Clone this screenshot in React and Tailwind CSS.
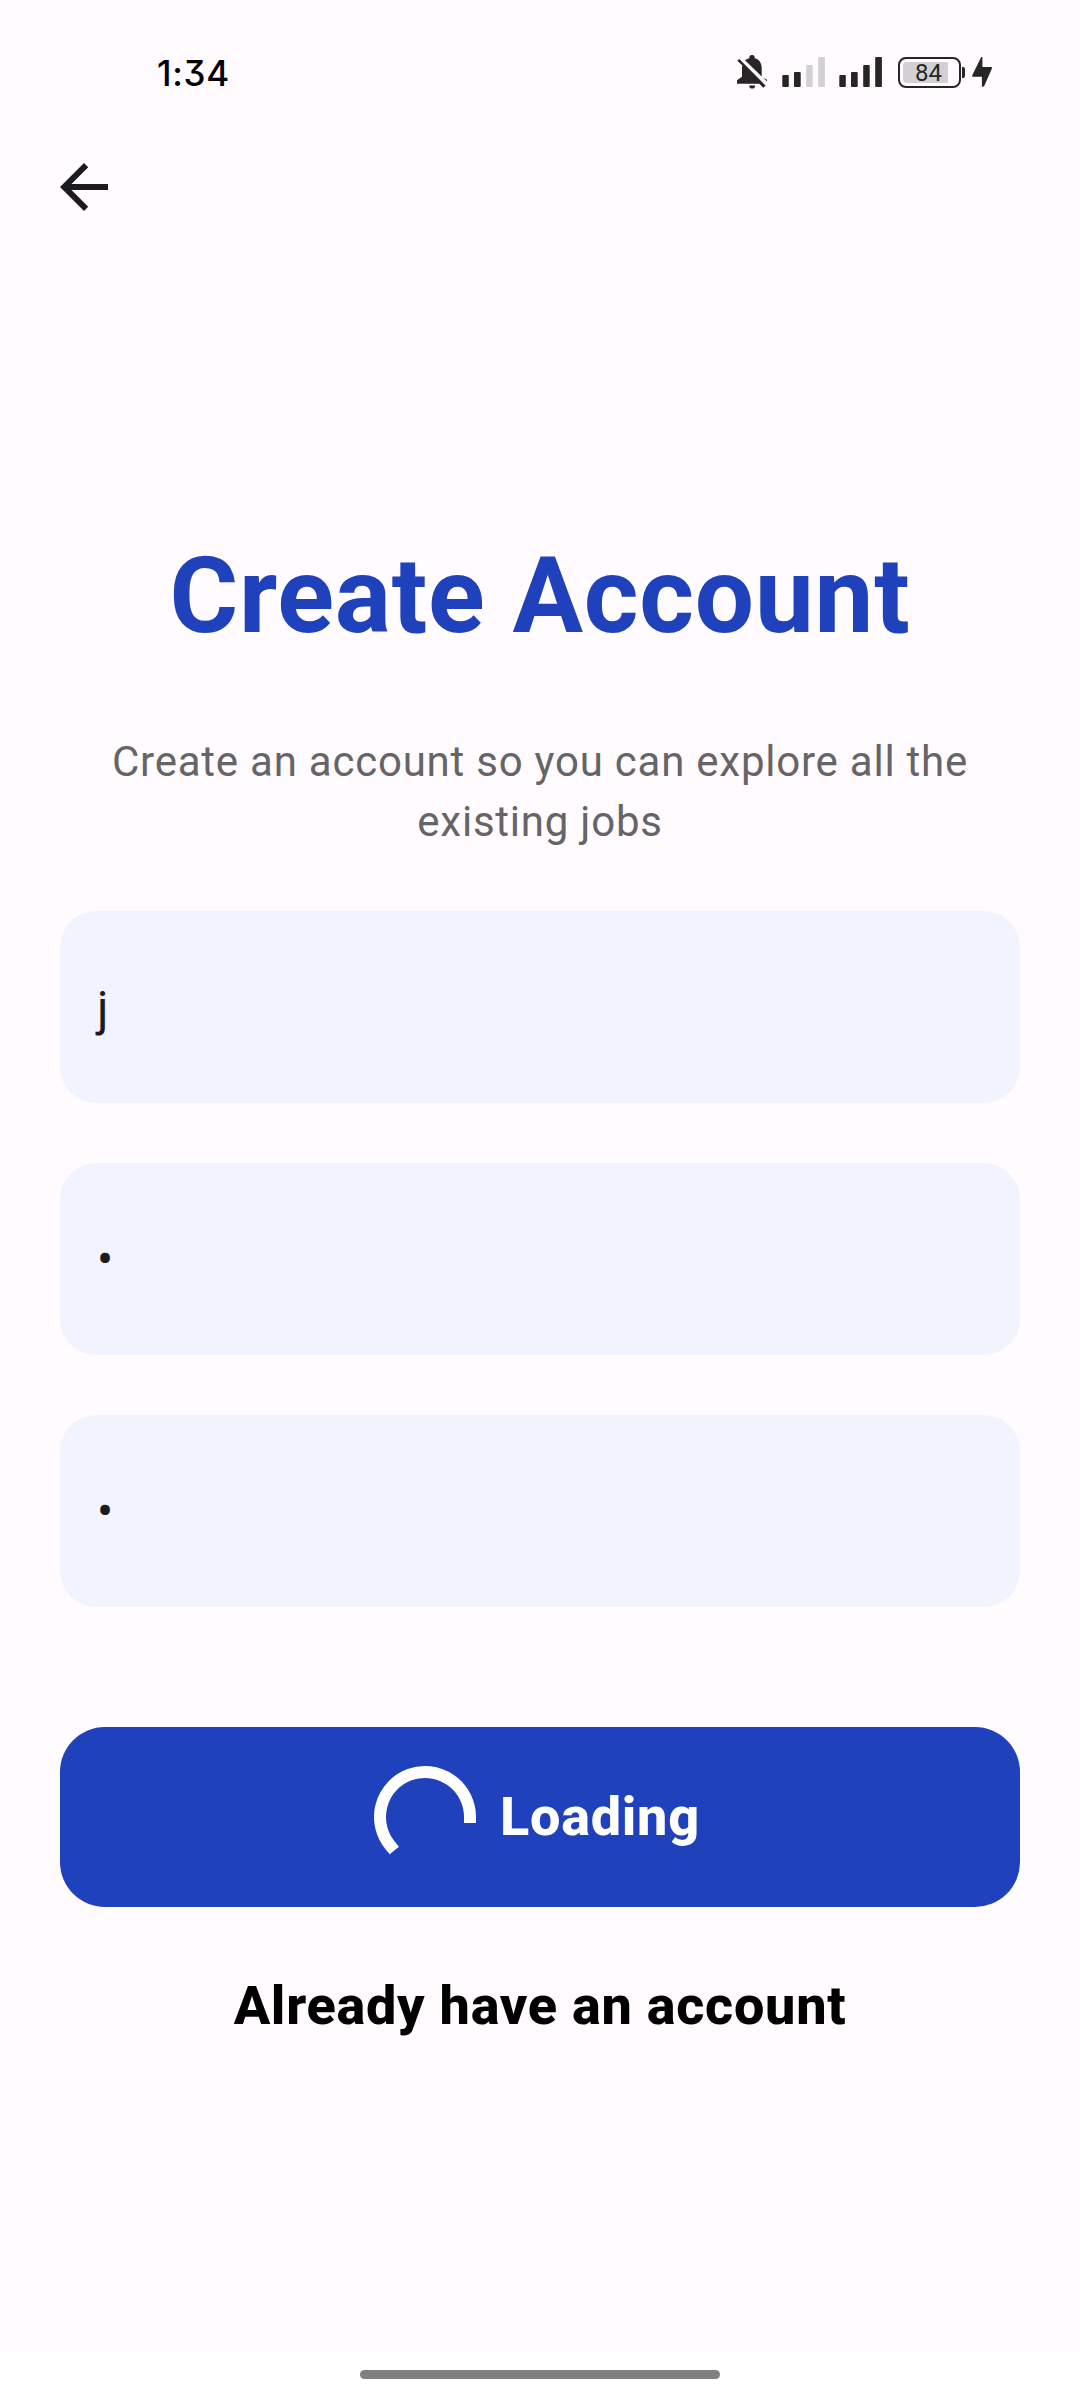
function StatusIcons() {
  return (
    <div className="flex h-[36px] items-center text-[#262626]">
      <svg className="h-[36px] w-[32px]" viewBox="0 0 32 36" fill="currentColor">
        <path d="M9 6.200C10.300 5.200 11.700 4.600 13.300 4.200V3.600a2.700 2.700 0 0 1 5.400 0v.6c4.700 1.200 7 5 7 9.800v8.700l2.600 1.700 2.700 1.400v1.800z" />
        <path d="M3.300 5L29.700 31.700l-2.400 2-4-4H1v-3.400l5-3.600V14c0-1 .1-1.800.4-2.600L1.300 6.700z" />
        <path d="M13.200 31.400h6a3 3.100 0 0 1-6 0z" />
      </svg>
      <svg className="ml-[14px] h-[36px] w-[44px]" viewBox="0 0 44 36" fill="currentColor">
        <rect x="0.300" y="21" width="6.500" height="12" rx="1" />
        <rect x="12" y="18" width="6.700" height="15" rx="1" />
        <rect x="24.200" y="11" width="6.500" height="22" rx="1" fill="#d2d0d3" />
        <rect x="36.200" y="3" width="6.700" height="30" rx="1" fill="#d2d0d3" />
      </svg>
      <svg className="ml-[13px] h-[36px] w-[44px]" viewBox="0 0 44 36" fill="currentColor">
        <rect x="0.300" y="21" width="6.500" height="12" rx="1" />
        <rect x="12" y="18" width="6.700" height="15" rx="1" />
        <rect x="24.200" y="11" width="6.500" height="22" rx="1" />
        <rect x="36.200" y="3" width="6.700" height="30" rx="1" />
      </svg>
      <div className="ml-[15px] flex h-[31px] w-[63px] items-center rounded-[8px] border-2 border-[#262626] pl-[3px]">
        <div className="flex h-[21px] w-[45px] items-center rounded-l-[4px] bg-[#d2d0d3] pt-[2px] pl-[12px] font-['Roboto',sans-serif] text-[24px] leading-none text-[#262626]">
          84
        </div>
      </div>
      <div className="ml-[1px] h-[11px] w-[3px] rounded-r-[2px] bg-[#262626]" />
      <svg className="ml-[6px] h-[36px] w-[22px]" viewBox="0 0 22 36" fill="currentColor">
        <path d="M10.200 3h1.200v10H20.300a.8.8 0 0 1 .7 1.200L13 32.500l-2.100.2V22.700H2a.9.900 0 0 1-.7-1.500z" />
      </svg>
    </div>
  );
}

function Field({ children }) {
  return (
    <div className="flex h-[192px] items-center rounded-[36px] bg-[#f1f4ff] px-[37px] text-[48px] leading-[72px] text-[#1c1b1f]">
      {children}
    </div>
  );
}

function Spinner() {
  return (
    <svg className="h-[102px] w-[102px]" viewBox="0 0 102 102" fill="none">
      <path d="M16.500 79.900A45 45 0 1 1 96 51" stroke="#fff" strokeWidth="12" strokeLinecap="square" />
    </svg>
  );
}

export default function App() {
  return (
    <div className="flex h-[2400px] w-[1080px] flex-col overflow-hidden bg-[#fffbff] font-['Roboto',sans-serif]">
      <header className="flex h-[144px] items-center justify-between pr-[87px] pl-[157px]">
        <div className="pt-[2px] font-['Inter',sans-serif] text-[35px] leading-[44px] font-medium tracking-[0.7px] text-black [font-feature-settings:'cv09']">
          1:34
        </div>
        <StatusIcons />
      </header>
      <button className="mt-[7px] ml-12 h-[72px] w-[72px]" aria-label="Back">
        <svg className="h-[72px] w-[72px]" viewBox="0 0 24 24" fill="#1c1b1f">
          <path d="M20 11H7.830l5.590-5.590L12 4l-8 8 8 8 1.410-1.410L7.830 13H20v-2z" />
        </svg>
      </button>
      <main className="flex flex-1 flex-col px-[60px] pt-[314px]">
        <h1 className="text-center text-[105px] leading-[120px] font-bold tracking-[0.8px] text-[#1f41bb]">
          Create Account
        </h1>
        <p className="mt-[75px] text-center text-[42px] leading-[60px] tracking-[0.77px] text-[#676468]">
          Create an account so you can explore all the
          <br />
          existing jobs
        </p>
        <form className="mt-[59px] flex flex-col gap-[60px]">
          <Field>
            <span className="pt-1">j</span>
          </Field>
          <Field>
            <span className="pt-0.5">•</span>
          </Field>
          <Field>
            <span className="pt-0.5">•</span>
          </Field>
        </form>
        <button className="mt-[120px] flex h-[180px] items-center justify-center gap-6 rounded-[45px] bg-[#1f41bb] pr-[6px] text-[54px] leading-[72px] font-extrabold tracking-[0.72px] text-white">
          <Spinner />
          Loading
        </button>
        <a className="mt-[63px] text-center text-[54px] leading-[72px] font-extrabold tracking-[0.72px] text-black">
          Already have an account
        </a>
      </main>
      <footer className="flex h-12 justify-center bg-white pt-[18px]">
        <div className="h-[9px] w-[360px] rounded-full bg-[#808080]" />
      </footer>
    </div>
  );
}
